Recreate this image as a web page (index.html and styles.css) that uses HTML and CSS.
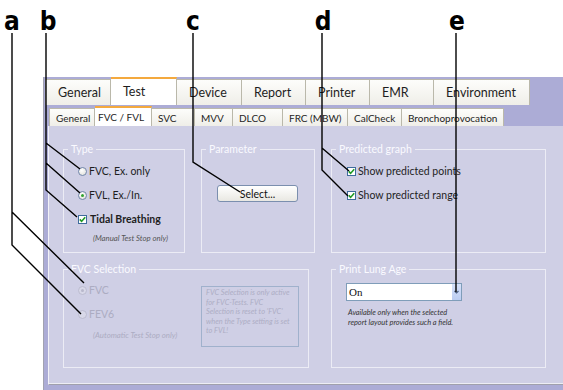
FILE: index.html
```html
<!DOCTYPE html>
<html lang="en">
<head>
    <meta charset="UTF-8">
    <meta name="viewport" content="width=device-width, initial-scale=1.0">
    <title>Test settings - FVC / FVL</title>
    <link rel="stylesheet" href="styles.css">
</head>
<body>
    <div class="window">
        <div class="tabs">
            <div class="tab">General</div>
            <div class="tab active">Test</div>
            <div class="tab">Device</div>
            <div class="tab">Report</div>
            <div class="tab">Printer</div>
            <div class="tab">EMR</div>
            <div class="tab">Environment</div>
        </div>
        <div class="subtabs">
            <div class="subtab">General</div>
            <div class="subtab active">FVC / FVL</div>
            <div class="subtab">SVC</div>
            <div class="subtab">MVV</div>
            <div class="subtab">DLCO</div>
            <div class="subtab">FRC (MBW)</div>
            <div class="subtab">CalCheck</div>
            <div class="subtab">Bronchoprovocation</div>
        </div>
        <div class="panel">
            <div class="groups">
                <div class="group">
                    <span class="legend">Type</span>
                    <div class="options">
                        <label class="opt"><span class="radio"></span>FVC, Ex. only</label>
                        <label class="opt"><span class="radio on"></span>FVL, Ex./In.</label>
                        <label class="opt bold"><span class="check"><svg width="7" height="7" viewBox="0 0 7 7"><path d="M0.8 3.4L2.6 5.4L6.2 1.2" /></svg></span>Tidal Breathing</label>
                    </div>
                    <p class="note">(Manual Test Stop only)</p>
                </div>

                <div class="group param">
                    <span class="legend">Parameter</span>
                    <button class="btn">Select...</button>
                </div>

                <div class="group predicted">
                    <span class="legend">Predicted graph</span>
                    <div class="options">
                        <label class="opt"><span class="check"><svg width="7" height="7" viewBox="0 0 7 7"><path d="M0.8 3.4L2.6 5.4L6.2 1.2" /></svg></span>Show predicted points</label>
                        <label class="opt"><span class="check"><svg width="7" height="7" viewBox="0 0 7 7"><path d="M0.8 3.4L2.6 5.4L6.2 1.2" /></svg></span>Show predicted range</label>
                    </div>
                </div>

                <div class="group fvc-sel">
                    <span class="legend">FVC Selection</span>
                    <div class="sel-left">
                        <div class="options">
                            <label class="opt disabled"><span class="radio on"></span>FVC</label>
                            <label class="opt disabled"><span class="radio"></span>FEV6</label>
                        </div>
                        <p class="note disabled">(Automatic Test Stop only)</p>
                    </div>
                    <div class="info">FVC Selection is only active<br>for FVC-Tests. FVC<br>Selection is reset to 'FVC'<br>when the Type setting is set<br>to FVL!</div>
                </div>

                <div class="group lung">
                    <span class="legend">Print Lung Age</span>
                    <div class="dropdown">
                        <span class="value">On</span>
                        <span class="arrow"><svg width="9" height="16" viewBox="0 0 9 16"><path d="M2.5 7L4.5 9L6.5 7" /></svg></span>
                    </div>
                    <p class="desc">Available only when the selected<br>report layout provides such a field.</p>
                </div>
            </div>
        </div>
    </div>

    <!-- callout letters and leader lines -->
    <svg class="callouts" width="563" height="390" viewBox="0 0 563 390">
        <text class="mark" x="12" y="30">a</text>
        <text class="mark" x="48" y="30">b</text>
        <text class="mark" x="193" y="30">c</text>
        <text class="mark" x="323" y="30">d</text>
        <text class="mark" x="457" y="30">e</text>
        <path class="lead" d="M12 33V245L81 314M12 212L84 283" />
        <path class="lead" d="M46 33V190L77 217M46 143L80 169M46 163L80 193" />
        <path class="lead" d="M193 33V162L240 192" />
        <path class="lead" d="M322 33V170L348 196M322 148L349 171" />
        <path class="lead" d="M456 33V292" />
    </svg>
</body>
</html>
```

FILE: styles.css
```css
body {
    margin: 0;
    width: 563px;
    height: 390px;
    overflow: hidden;
    position: relative;
    background: #fff;
    font-family: Lato, 'Open Sans', sans-serif;
    color: #1e1e1e;
}
.window {
    margin: 77px 0 0 43px;
    height: 313px;
    border-left: 1px solid #a2a2b0;
    background-color: #acacd6;
}
.tabs {
    display: grid;
    grid-template-columns: 66px 66px 65px 64px 64px 64px 96px;
    align-items: end;
    height: 28px;
    padding-left: 1px;
}
.tab {
    box-sizing: border-box;
    height: 26px;
    padding-left: 12px;
    border: 1px solid #bab8aa;
    border-left: none;
    border-bottom: none;
    background: linear-gradient(#fdfdfb, #efeee8);
    font-size: 12.5px;
    line-height: 26px;
    white-space: nowrap;
}
.tab:first-child {
    border-left: 1px solid #bab8aa;
}
.tab.active {
    height: 28px;
    border-top: 2px solid #f4a93e;
    background: #fff;
    line-height: 25px;
}
.subtabs {
    display: grid;
    grid-template-columns: 46px 57px 43px 38px 50px 65px 54px 102px;
    align-items: end;
    height: 21px;
    padding-left: 5px;
}
.subtab {
    box-sizing: border-box;
    height: 18px;
    padding: 1px 0 0 6px;
    border: 1px solid #bab8aa;
    border-left: none;
    border-bottom: none;
    background: linear-gradient(#fdfdfb, #efeee8);
    font-size: 10px;
    line-height: 16px;
    white-space: nowrap;
}
.subtab:first-child {
    border-left: 1px solid #bab8aa;
}
.subtab.active {
    height: 20px;
    padding-left: 3px;
    border-top: 2px solid #f4a93e;
    background: #fff;
}
.panel {
    box-sizing: border-box;
    height: 259px;
    margin-left: 4px;
    padding: 23px 0 0 14px;
    background-color: #cfcfe5;
    border-left: 1px solid #f2f2f8;
    border-bottom: 1px solid #a0a0ac;
    box-shadow: inset 0 -1px 0 #ededf4;
}
.groups {
    display: grid;
    grid-template-columns: 122px 114px 215px;
    grid-template-rows: 104px 99px;
    gap: 16px;
}
.group {
    position: relative;
    box-sizing: border-box;
    border: 1px solid #ececf5;
}
.legend {
    position: absolute;
    top: -8px;
    left: 4px;
    padding: 0 3px;
    background-color: #cfcfe5;
    color: #fafaff;
    font-size: 10.5px;
    line-height: 14px;
}
.options {
    display: flex;
    flex-direction: column;
    padding: 9px 0 0 14px;
}
.opt {
    display: flex;
    align-items: center;
    gap: 2px;
    height: 24px;
    font-size: 10.5px;
    white-space: nowrap;
}
.opt.bold {
    font-weight: bold;
    gap: 3px;
}
.radio {
    position: relative;
    flex: none;
    box-sizing: border-box;
    width: 9px;
    height: 9px;
    border: 1px solid #7287aa;
    border-radius: 50%;
    background: radial-gradient(circle at 40% 35%, #fff, #dcdcd4);
}
.radio.on::after {
    content: "";
    position: absolute;
    left: 2px;
    top: 2px;
    width: 3px;
    height: 3px;
    border-radius: 50%;
    background-color: #32a232;
}
.check {
    display: flex;
    align-items: center;
    justify-content: center;
    flex: none;
    box-sizing: border-box;
    width: 9px;
    height: 9px;
    border: 1px solid #3f6c9c;
    background: #fff;
}
.check path {
    fill: none;
    stroke: #1f9a24;
    stroke-width: 1.6;
}
.note {
    margin: 1px 0 0 29px;
    font-size: 7.8px;
    font-style: italic;
    line-height: 12px;
    color: #555;
    white-space: nowrap;
}
.disabled {
    color: #acacc2;
}
.disabled .radio {
    border-color: #bcbcd0;
    background: #d8d8e8;
}
.disabled .radio.on::after {
    background-color: #b8b8cc;
}
.param .btn {
    display: block;
    width: 81px;
    height: 17px;
    margin: 35px 0 0 15px;
    padding: 0;
    border: 1px solid #7b8fae;
    border-radius: 3px;
    background: linear-gradient(#fff, #e9e8e2);
    font-family: Lato, 'Open Sans', sans-serif;
    font-size: 10.5px;
    color: #111;
}
.predicted .options {
    padding-left: 15px;
}
.fvc-sel {
    grid-column: 1 / 3;
    width: 246px;
    display: grid;
    grid-template-columns: 137px 98px;
}
.fvc-sel .options {
    padding-top: 8px;
}
.fvc-sel .note {
    margin-top: 3px;
}
.info {
    box-sizing: border-box;
    height: 61px;
    margin-top: 16px;
    padding: 1px 4px;
    border: 1px solid #a0b1cc;
    font-size: 7.4px;
    font-style: italic;
    line-height: 9.6px;
    color: #adadc4;
    white-space: nowrap;
}
.lung {
    padding: 13px 0 0 14px;
}
.dropdown {
    display: flex;
    box-sizing: border-box;
    width: 116px;
    height: 18px;
    border: 1px solid #7f9db9;
    background: #fff;
}
.dropdown .value {
    padding-left: 2px;
    font-family: 'Liberation Serif', serif;
    font-size: 11px;
    line-height: 16px;
    color: #111;
}
.dropdown .arrow {
    margin-left: auto;
    width: 9px;
    height: 16px;
    background: linear-gradient(#d6e1fa, #bccdf2);
}
.arrow path {
    fill: none;
    stroke: #4d6185;
    stroke-width: 1.2;
}
.desc {
    margin: 7px 0 0 2px;
    font-size: 7.4px;
    font-style: italic;
    line-height: 10px;
    color: #333;
    white-space: nowrap;
}
.callouts {
    position: absolute;
    left: 0;
    top: 0;
    pointer-events: none;
}
.mark {
    font-family: 'Liberation Sans Narrow', 'DejaVu Sans Condensed', sans-serif;
    font-weight: bold;
    font-size: 26px;
    text-anchor: middle;
    fill: #000;
}
.lead {
    fill: none;
    stroke: #000;
    stroke-width: 1.4;
}
```
